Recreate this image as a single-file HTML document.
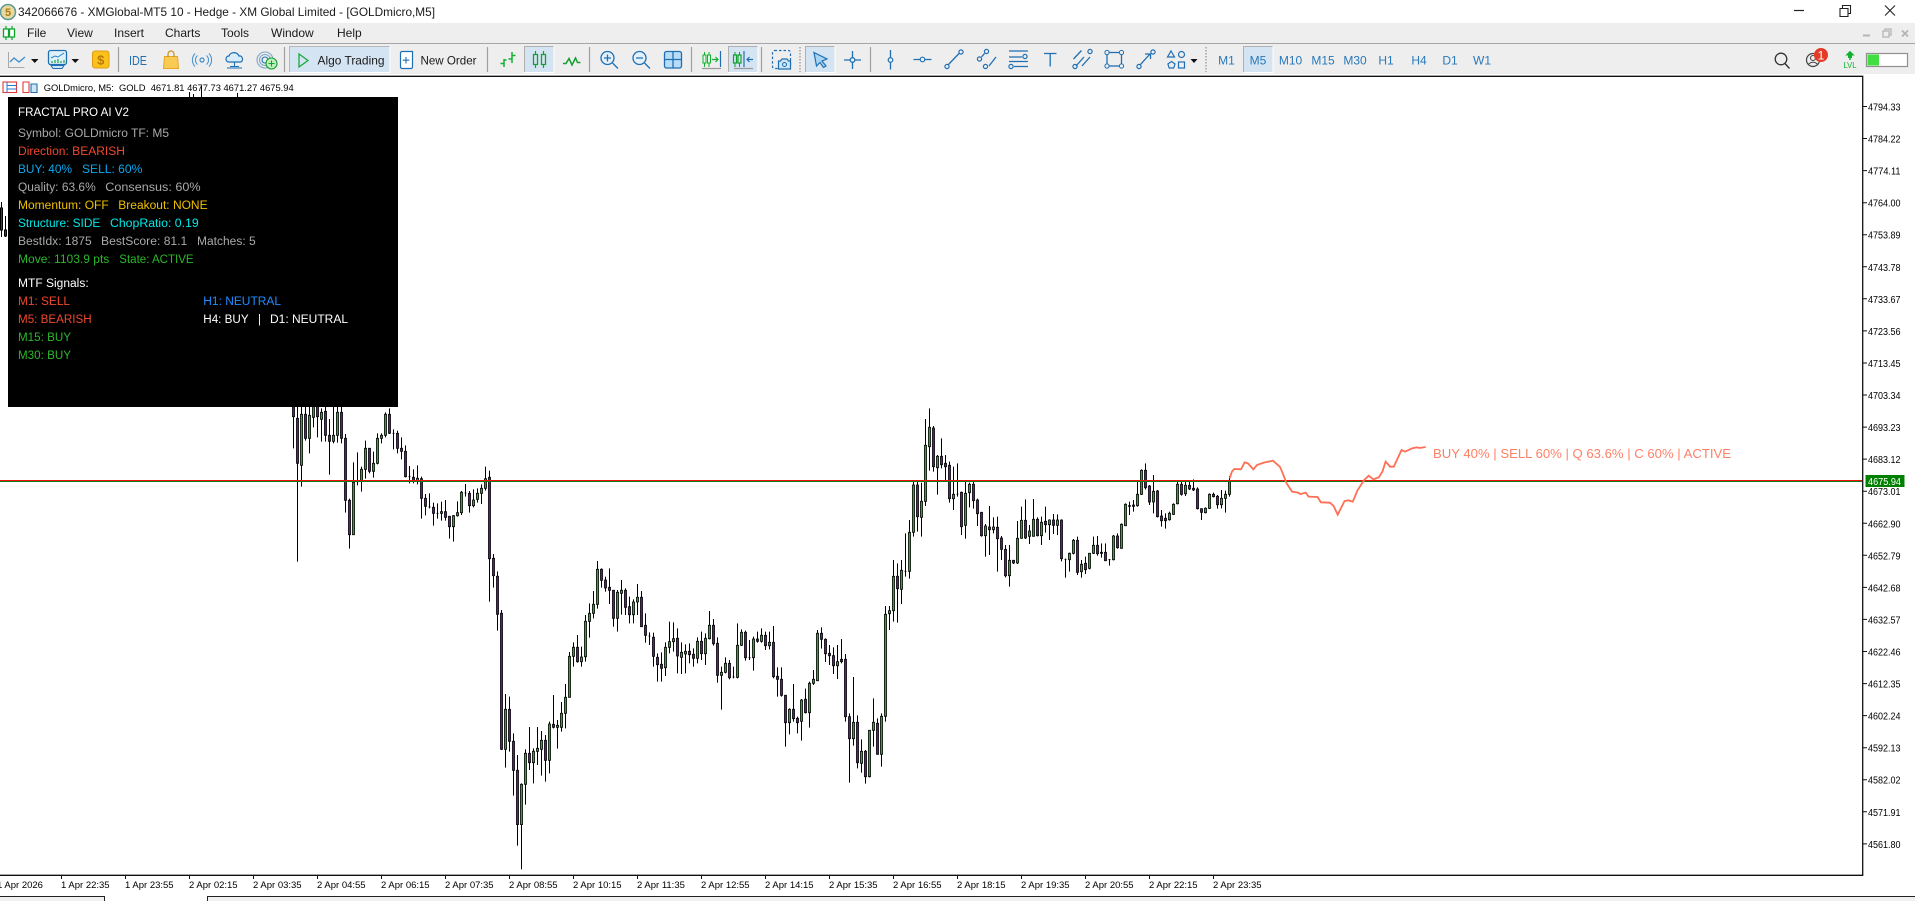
<!DOCTYPE html>
<html><head><meta charset="utf-8"><title>XMGlobal-MT5</title>
<style>
html,body{margin:0;padding:0;background:#fff;width:1915px;height:901px;overflow:hidden}
svg{display:block}
text{font-family:"Liberation Sans",sans-serif;white-space:pre}
.m{font-size:12px;fill:#1a1a1a}
.tf{font-size:12px;fill:#2a78b8;text-anchor:middle}
.a{font-size:10px;fill:#000}
.t{font-size:9.5px;fill:#000}
.p{font-size:11.5px}
.i{fill:none;stroke:#1f6fb2;stroke-width:1.3}
.g{fill:none;stroke:#1f6fb2;stroke-width:1.2}
.w{fill:none;stroke:#000;stroke-width:3}
.cg{fill:#08c408;stroke:#000;stroke-width:2.4}
.cp{fill:#6a10b0;stroke:#000;stroke-width:2.4}
.sep{stroke:#a0a0a0;stroke-width:1.2}
</style></head><body>
<svg width="1915" height="901" viewBox="0 0 1915 901" xmlns="http://www.w3.org/2000/svg">
<rect width="1915" height="901" fill="#fff"/>
<!-- title bar -->
<circle cx="8" cy="12" r="7.5" fill="#e9d9a0" stroke="#5a9a9a" stroke-width="1.5"/>
<text x="8" y="16" font-size="11" text-anchor="middle" fill="#a87a10" font-weight="bold">5</text>
<text x="18" y="16" font-size="12" fill="#1a1a1a" textLength="417" lengthAdjust="spacingAndGlyphs">342066676 - XMGlobal-MT5 10 - Hedge - XM Global Limited - [GOLDmicro,M5]</text>
<path d="M1794 10.5h10" stroke="#222" stroke-width="1.2"/>
<path d="M1840 8.5h8v8h-8zM1842.500 8.500v-3h8v8h-2.500" fill="none" stroke="#222" stroke-width="1.1"/>
<path d="M1885 5.500l10 10M1895 5.500l-10 10" stroke="#222" stroke-width="1.1"/>
<!-- menu bar -->
<rect y="23" width="1915" height="20" fill="#eeeeee"/>
<path d="M6 26v14M12 26v14" stroke="#0aa52a" stroke-width="1.2"/><path d="M3.500 29h5v8h-5zM9.500 29h5v8h-5z" fill="#fff" stroke="#0aa52a" stroke-width="1.3"/>
<text class="m" x="27" y="37">File</text><text class="m" x="67" y="37">View</text><text class="m" x="114" y="37">Insert</text><text class="m" x="165" y="37">Charts</text><text class="m" x="221" y="37">Tools</text><text class="m" x="271" y="37">Window</text><text class="m" x="337" y="37">Help</text>
<path d="M1863 35.500h7" stroke="#b5b5b5" stroke-width="2"/>
<path d="M1883 31h6v6h-6zM1885 31v-2h6v6h-2" fill="none" stroke="#b5b5b5" stroke-width="1.3"/>
<path d="M1902 30.500l6 6M1908 30.500l-6 6" stroke="#b5b5b5" stroke-width="1.8"/>
<rect y="43" width="1915" height="1.2" fill="#a6a6a6"/>
<!-- toolbar -->
<rect y="44" width="1915" height="30" fill="#eeeeee"/>
<rect y="74" width="1915" height="2" fill="#fff"/>
<!-- chart type -->
<path d="M8.500 52v15.500h16" fill="none" stroke="#a8a8a8" stroke-width="1"/>
<path d="M10 62l4-4 5 4 6-5" fill="none" stroke="#3b8ed0" stroke-width="1.3"/>
<path d="M31 59h7.500l-3.750 4z" fill="#111"/>
<rect x="48.500" y="50.500" width="18" height="14" rx="2" fill="#dff0fb" stroke="#1f6fb2" stroke-width="1.3"/>
<path d="M51 65.500h13l-2 3h-9z" fill="#cfe6f7" stroke="#1f6fb2"/>
<path d="M51 58l4-2 3 1 6-4" fill="none" stroke="#2a83c6" stroke-width="1"/>
<path d="M52 63v-2M55 63v-3M58 63v-4M61 63v-2M64 63v-3" stroke="#18a83a" stroke-width="1.2"/>
<path d="M71.500 59h7.500l-3.750 4z" fill="#111"/>
<rect x="92.500" y="51" width="16.500" height="17" rx="2.500" fill="#fbc21a" stroke="#e09a10"/>
<text x="100.700" y="64.500" font-size="13" text-anchor="middle" fill="#b97a08" font-weight="bold">$</text>
<path class="sep" d="M118.500 47v25"/>
<text x="138" y="65" font-size="12.500" text-anchor="middle" fill="#1f6fb2" textLength="18" lengthAdjust="spacingAndGlyphs">IDE</text>
<path d="M164.500 56.500h13l1 12h-15z" fill="#f9cb55" stroke="#e6a81e"/>
<path d="M168 57v-3a3 3 0 0 1 6 0v3" fill="none" stroke="#c98d10" stroke-width="1.2"/>
<circle cx="202" cy="60" r="2" fill="none" stroke="#3b8ed0" stroke-width="1.2"/>
<path d="M197.500 55.500a6 6 0 0 0 0 9M206.500 55.500a6 6 0 0 1 0 9M195 53.500a9.500 9.500 0 0 0 0 13M209 53.500a9.500 9.500 0 0 1 0 13" fill="none" stroke="#4d96d1" stroke-width="1.1"/>
<path d="M229 62c-4 0-4-6 0-6 1-4 8-5 10 0 4-1 5 6 1 6z" fill="#d8ecfa" stroke="#1f6fb2" stroke-width="1.2"/>
<path d="M234.500 62v4M227 68h15M230 66.500h9" stroke="#1f6fb2" stroke-width="1.1"/>
<circle cx="265" cy="60" r="8" fill="none" stroke="#7ea6c6" stroke-width="1.1"/><circle cx="265" cy="60" r="5.500" fill="none" stroke="#7ea6c6" stroke-width="1.1"/><circle cx="265" cy="60" r="3" fill="none" stroke="#1f6fb2" stroke-width="1.1"/>
<circle cx="271.500" cy="63.500" r="5.500" fill="#bfeebe" stroke="#14a02e" stroke-width="1.1"/><path d="M268.500 63.500h6M271.500 60.500v6" stroke="#14a02e" stroke-width="1.1"/>
<path class="sep" d="M284.500 47v25"/>
<rect x="289.500" y="46.500" width="100" height="25.500" fill="#d5e4f2"/><path d="M289.500 72v-25.500h100" fill="none" stroke="#b8b8b8"/><path d="M390 46.500v26h-100.500" fill="none" stroke="#fff"/>
<path d="M299 54l9 6.500-9 6.500z" fill="none" stroke="#18a83a" stroke-width="1.3"/>
<text x="317.500" y="64.500" class="m" textLength="67" lengthAdjust="spacingAndGlyphs">Algo Trading</text>
<path d="M400.500 53a1.500 1.500 0 0 1 1.500-1.500h10.500v15.500a1.500 1.500 0 0 1-1.500 1.500h-9a1.500 1.500 0 0 1-1.500-1.500z" fill="#fff" stroke="#1f6fb2" stroke-width="1.2"/>
<path d="M406 57v6.500M402.800 60.200h6.500" stroke="#1f6fb2" stroke-width="1.1"/>
<text x="420.500" y="64.500" class="m" textLength="56" lengthAdjust="spacingAndGlyphs">New Order</text>
<path class="sep" d="M487.500 47v25"/>
<path d="M504 59v8M500.500 63.500h3.500M504 60h2.500M512 52v11M508.500 59h3.500M512 55.500h3.500" stroke="#14b02e" stroke-width="1.5" fill="none"/>
<rect x="524.500" y="46.500" width="29" height="25.500" fill="#d5e4f2"/><path d="M524.500 72v-25.500h29" fill="none" stroke="#b0b0b0"/><path d="M554 46.500v26h-29.500" fill="none" stroke="#fff"/>
<path d="M535.500 51v17M543.500 51v17" stroke="#14a02e" stroke-width="1.2"/><path d="M533.500 54.500h4v10h-4zM541.500 54.500h4v10h-4z" fill="#d5e4f2" stroke="#14a02e" stroke-width="1.3"/>
<path d="M563 63.500h3l3-5 3 6.500 3.500-7 2 4.500h3" fill="none" stroke="#14a02e" stroke-width="1.5"/>
<path class="sep" d="M589.500 47v25"/>
<circle cx="607.500" cy="58" r="6.500" fill="#e4f1fb" stroke="#1f6fb2" stroke-width="1.3"/><path d="M604 58h7M607.500 54.500v7M612.500 63l5.500 5.500" stroke="#1f6fb2" stroke-width="1.3"/>
<circle cx="639.500" cy="58" r="6.500" fill="#e4f1fb" stroke="#1f6fb2" stroke-width="1.3"/><path d="M636 58h7M644.500 63l5.500 5.500" stroke="#1f6fb2" stroke-width="1.3"/>
<rect x="664.500" y="51.500" width="17" height="16.500" rx="2" fill="#b8dcf8" stroke="#1f6fb2" stroke-width="1.3"/><path d="M673 51.500v16.500M664.500 59.500h17" stroke="#1f6fb2" stroke-width="1.3"/>
<path class="sep" d="M691.500 47v25"/>
<path d="M704.500 52v15M709 52v15" stroke="#14b02e"/><path d="M703 55h3v8h-3zM707.500 55h3v8h-3z" fill="#e4f7e4" stroke="#14b02e"/>
<path d="M712 59.500h6M715.500 57l2.500 2.500-2.500 2.500" fill="none" stroke="#14b02e" stroke-width="1.2"/><path d="M720.500 51v16" stroke="#1f6fb2" stroke-width="1.2"/><path d="M702 68.500h19" stroke="#9a9a9a" stroke-width="1.2"/>
<rect x="728.500" y="46.500" width="29" height="25.500" fill="#d5e4f2"/><path d="M728.500 72v-25.500h29" fill="none" stroke="#b0b0b0"/><path d="M758 46.500v26h-29.500" fill="none" stroke="#fff"/>
<path d="M735 52v15M739.500 52v15" stroke="#14a02e"/><path d="M733.500 55h3v8h-3zM738 55h3v8h-3z" fill="#d5e4f2" stroke="#14a02e" stroke-width="1.2"/>
<path d="M744 51v16" stroke="#1f6fb2" stroke-width="1.2"/><path d="M753 59.500h-6M749.500 57l-2.500 2.500 2.500 2.500" fill="none" stroke="#1f6fb2" stroke-width="1.2"/><path d="M734 68.500h19" stroke="#9a9a9a" stroke-width="1.2"/>
<path class="sep" d="M761.500 47v25"/>
<rect x="772.500" y="50.500" width="18" height="18" rx="2" fill="none" stroke="#1f6fb2" stroke-width="1.2" stroke-dasharray="2.500 2"/>
<path d="M778.500 61h2l1.500-2h5l1.500 2h2v8h-12z" fill="#cfe6f7" stroke="#1f6fb2" stroke-width="1.2"/><circle cx="784.500" cy="64.500" r="2" fill="none" stroke="#1f6fb2"/>
<path d="M800 47v25" stroke="#b5b5b5" stroke-width="2" stroke-dasharray="1.500 1.500"/>
<rect x="805.500" y="46.500" width="29" height="25.500" fill="#d5e4f2"/><path d="M805.500 72v-25.500h29" fill="none" stroke="#b0b0b0"/><path d="M835 46.500v26h-29.500" fill="none" stroke="#fff"/>
<path d="M814 52.500l13 6.500-5 2 4 5-2.500 1.500-3.500-5-3.500 3.500z" fill="#a8d4f5" stroke="#1f6fb2" stroke-width="1.2"/>
<path class="i" d="M852.500 51v18M844 60h17"/><circle class="i" cx="852.500" cy="60" r="2.300" fill="#eee" style="fill:#eee"/>
<path class="sep" d="M870.500 47v25"/>
<path class="i" d="M890.500 50v7.500M890.500 62.500v7"/><circle class="g" cx="890.500" cy="60" r="2.300"/>
<path class="i" d="M913.500 59.500h6.500M925 59.500h6.500"/><circle class="g" cx="922.500" cy="59.500" r="2.300"/>
<path class="i" d="M948 65l11-11.500"/><circle class="g" cx="947" cy="66.500" r="2.100"/><circle class="g" cx="961" cy="52" r="2.100"/>
<path class="i" d="M981.500 57l3-3.500M989 66l7-9"/><circle class="g" cx="979.500" cy="59" r="2.100"/><circle class="g" cx="986.500" cy="51.500" r="2.100"/><circle class="g" cx="985.500" cy="66.500" r="2.100"/>
<path class="i" d="M1009 51h19M1009 57h13M1009 61.500h19M1014 66.500h14"/><circle class="g" cx="1025" cy="56.500" r="2.100"/><circle class="g" cx="1011" cy="66.500" r="2.100"/>
<path class="i" d="M1044 53.500h12.500M1050.200 53.500v13"/>
<path class="i" d="M1073.500 59l8-8.500M1076 66l8-9M1082 66l8-9"/><circle class="g" cx="1075" cy="66.500" r="2.100"/><circle class="g" cx="1090" cy="51.500" r="2.100"/>
<rect class="i" x="1107" y="52.500" width="14.500" height="13.500"/><circle cx="1107" cy="52.500" r="2.100" fill="#eee" stroke="#1f6fb2"/><circle cx="1121.500" cy="52.500" r="2.100" fill="#eee" stroke="#1f6fb2"/><circle cx="1107" cy="66" r="2.100" fill="#eee" stroke="#1f6fb2"/><circle cx="1121.500" cy="66" r="2.100" fill="#eee" stroke="#1f6fb2"/>
<path class="i" d="M1140 65l10-11M1145 54h5.500v5"/><circle class="g" cx="1139" cy="66.500" r="2.100"/><circle class="g" cx="1153" cy="52" r="2.100"/>
<path class="g" d="M1171 51l3.500 6h-7z"/><circle class="g" cx="1181.500" cy="54.500" r="3"/><path class="g" d="M1171.500 61.500l3.500 2.500-1.300 4h-4.500l-1.300-4z"/><rect class="g" x="1178.500" y="62" width="6" height="6"/>
<path d="M1190.500 59h7l-3.500 4z" fill="#111"/>
<path d="M1206 47v25" stroke="#b5b5b5" stroke-width="2" stroke-dasharray="1.500 1.500"/>
<rect x="1243.500" y="46.500" width="29" height="25.500" fill="#d5e4f2"/><path d="M1243.500 72v-25.500h29" fill="none" stroke="#b0b0b0"/><path d="M1273 46.500v26h-29.500" fill="none" stroke="#fff"/>
<text class="tf" x="1226.500" y="64.500">M1</text><text class="tf" x="1258" y="64.500">M5</text><text class="tf" x="1290.500" y="64.500">M10</text><text class="tf" x="1323" y="64.500">M15</text><text class="tf" x="1355" y="64.500">M30</text><text class="tf" x="1386" y="64.500">H1</text><text class="tf" x="1419" y="64.500">H4</text><text class="tf" x="1450" y="64.500">D1</text><text class="tf" x="1482" y="64.500">W1</text>
<circle cx="1781" cy="59" r="5.800" fill="none" stroke="#333" stroke-width="1.3"/><path d="M1785 63.500l4.500 5" stroke="#333" stroke-width="1.4"/>
<circle cx="1813" cy="60" r="6.500" fill="none" stroke="#444" stroke-width="1.2"/><circle cx="1813" cy="58" r="2.500" fill="none" stroke="#444" stroke-width="1.1"/><path d="M1808.500 64.500c2-3 7-3 9 0" fill="none" stroke="#444" stroke-width="1.1"/>
<circle cx="1821" cy="55" r="7" fill="#e33b28"/><text x="1821" y="59.500" font-size="12" text-anchor="middle" fill="#fff">1</text>
<path d="M1850 51.500l3.500 3.500h-2v2.500h-3v-2.500h-2z" fill="#14b02e" stroke="#14b02e"/><path d="M1850 57v3" stroke="#14b02e" stroke-width="1.500"/>
<text x="1850" y="68" font-size="8.500" text-anchor="middle" fill="#14b02e" textLength="13" lengthAdjust="spacingAndGlyphs">LVL</text>
<rect x="1866.500" y="53.500" width="41" height="13" fill="#fff" stroke="#909090" stroke-width="1.200"/><rect x="1867.500" y="54.500" width="11.500" height="11" fill="#3fe03f"/>

<!-- chart legend -->
<rect x="3" y="82" width="13.500" height="10.500" fill="#fff" stroke="#e03a3a" stroke-width="1.1"/><path d="M7 82v10.500M7 85.500h9.500M7 89h9.500" stroke="#2a78d0" stroke-width="1"/>
<path d="M23 82h6v10.500h-6z" fill="#fff" stroke="#e03a3a" stroke-width="1.1"/><path d="M31 84h6v8.500h-6z" fill="#cfe6f7" stroke="#1f6fb2" stroke-width="1.1"/>
<text x="43.700" y="91" font-size="9.500" fill="#000" textLength="250" lengthAdjust="spacingAndGlyphs">GOLDmicro, M5:  GOLD  4671.81 4677.73 4671.27 4675.94</text>

<!-- candles partially hidden top -->
<path d="M189.500 92v6M193.500 94v4M201.500 86v12M237.500 93v5M1.500 202v35M5.500 216v21" stroke="#000" fill="none"/>
<path d="M.5 208h2v22h-2z" fill="#6a10b0" stroke="#000"/><path d="M4.500 230h2v6h-2z" fill="#6a10b0" stroke="#000"/>

<!-- candles group A -->
<g transform="translate(270.17 400) scale(.33333)">
<path class="w" d="M70 0V145M82 0V485M94 0V260M106 0V122M118 0V160M130 0V82M142 0V112M154 25V125M166 0V125M178 57V224M190 0V130M202 0V128M214 0V130M226 102V338M238 296V446M250 187V404M262 157V256M274 200V275M286 122V236M298 145V220M310 155V233M322 100V193M334 100V130M346 37V112M358 25V102M370 88V148M382 92V160M394 112V178M406 136V232M418 198V250M430 208V250M442 196V253M454 230V356M466 282V346M478 280V325M490 308V377M502 310V356M514 305V362M526 300V362M538 348V416M550 345V425M562 304V350M574 273V345M586 252V290M598 273V338M610 268V322M622 265V308M634 253V312M646 200V272M658 212V605M670 462V563M682 514V692M694 630V1050M706 882V1103M718 890V1055M730 1000V1187M742 1065V1337M754 1150V1408M766 1048V1214M778 981V1110M790 1045V1150M802 981V1095M814 993V1127M826 1005V1145M838 965V1120M850 885V985M862 960V1046M874 906V995M886 852V985M898 756V893M910 727V800M922 705V788M934 740V800M946 645V785M958 610V713M970 573V655M982 483V626M994 505V563M1006 530V575M1018 505V612M1030 570V680M1042 570V695M1054 540V644M1066 565V645M1078 590V670M1090 598V670M1102 552V645M1114 573V680M1126 640V728M1138 697V735M1150 698V800M1162 760V845M1174 757V845"/>
<path class="cg" d="M91 43H97V196H91ZM115 46H121V115H115ZM127 0H133V52H127ZM151 37H157V58H151ZM187 106H193V124H187ZM199 37H205V106H199ZM247 247H253V404H247ZM271 208H277V244H271ZM283 145H289V208H283ZM307 190H313V214H307ZM319 115H325V190H319ZM331 106H337V115H331ZM343 43H349V106H343ZM439 235H445V244H439ZM511 335H517V340H511ZM547 347H553V380H547ZM559 338H565V347H559ZM571 277H577V338H571ZM607 300H613V317H607ZM619 280H625V298H619ZM631 265H637V280H631ZM643 236H649V265H643ZM703 928H709V1048H703ZM751 1153H757V1274H751ZM763 1060H769V1153H763ZM787 1054H793V1088H787ZM799 1045H805V1054H799ZM811 1021H817V1048H811ZM835 972H841V1081H835ZM859 976H865V982H859ZM871 940H877V982H871ZM883 892H889V940H883ZM895 769H901V892H895ZM907 742H913V769H907ZM931 771H937V785H931ZM943 664H949V770H943ZM955 640H961V664H955ZM967 613H973V640H967ZM979 508H985V613H979ZM1039 577H1045V655H1039ZM1051 571H1057V580H1051ZM1087 606H1093V644H1087ZM1099 592H1105V606H1099Z"/>
<path class="cp" d="M67 0H73V50H67ZM79 55H85V190H79ZM103 43H109V115H103ZM139 0H145V50H139ZM163 34H169V106H163ZM175 106H181V124H175ZM211 37H217V115H211ZM223 115H229V301H223ZM235 301H241V404H235ZM295 145H301V214H295ZM355 43H361V100H355ZM379 100H385V145H379ZM391 145H397V154H391ZM403 154H409V230H403ZM427 232H433V244H427ZM451 236H457V295H451ZM463 295H469V319H463ZM487 322H493V340H487ZM523 335H529V352H523ZM535 349H541V380H535ZM595 280H601V317H595ZM655 232H661V476H655ZM667 475H673V527H667ZM679 529H685V643H679ZM691 640H697V1048H691ZM715 928H721V1024H715ZM727 1024H733V1111H727ZM739 1111H745V1274H739ZM775 1060H781V1088H775ZM823 1021H829V1081H823ZM847 973H853V982H847ZM919 742H925V785H919ZM991 508H997V541H991ZM1003 540H1009V564H1003ZM1015 562H1021V571H1015ZM1027 571H1033V655H1027ZM1063 571H1069V622H1063ZM1075 620H1081V644H1075ZM1111 592H1117V680H1111ZM1123 676H1129V706H1123ZM1147 712H1153V769H1147ZM1159 772H1165V794H1159ZM1171 793H1177V805H1171ZM259 245H265ZM367 100H373ZM415 230H421ZM475 321H481ZM499 340H505ZM583 279H589ZM1135 708H1141Z"/>
</g>
<!-- candles group B -->
<g transform="translate(660.17 400) scale(.33333)">
<path class="w" d="M16 727V828M28 665V760M40 667V755M52 685V820M64 727V822M76 733V820M88 730V790M100 745V800M112 712V790M124 695V780M136 700V795M148 633V718M160 657V737M172 712V848M184 800V929M196 772V820M208 780V838M220 800V835M232 670V835M244 688V738M256 692V782M268 720V780M280 710V812M292 695V728M304 685V728M316 695V750M328 695V748M340 678V835M352 802V890M364 802V890M376 885V1040M388 925V1003M400 852V965M412 950V1000M424 897V1022M436 866V940M448 845V983M460 810V855M472 690V843M484 682V746M496 715V786M508 735V795M520 742V822M532 735V837M544 717V790M556 762V965M568 940V1148M580 831V1037M592 946V1105M604 1018V1118M616 1050V1151M628 990V1132M640 895V1040M652 955V1064M664 940V1100M676 618V965M688 618V690M700 480V665M712 490V668M724 480V612M736 400V530M748 360V536M760 245V410M772 245V395M784 248V410M796 57V318M808 25V212M820 78V215M832 165V284M844 115V205M856 165V245M868 185V308M880 200V330M892 190V290M904 275V405M916 240V416M928 248V322M940 240V326M952 296V378M964 336V410"/>
<path class="cg" d="M13 742H19V803H13ZM25 725H31V742H25ZM37 716H43V725H37ZM61 757H67V772H61ZM73 754H79V762H73ZM109 724H115V775H109ZM133 715H139V761H133ZM145 676H151V716H145ZM181 817H187V826H181ZM193 790H199V817H193ZM229 736H235V832H229ZM241 697H247V736H241ZM277 717H283V773H277ZM301 706H307V724H301ZM325 727H331V737H325ZM385 928H391V968H385ZM421 900H427V964H421ZM445 850H451V938H445ZM457 838H463V850H457ZM469 700H475V842H469ZM529 785H535V797H529ZM577 967H583V1016H577ZM601 1054H607V1090H601ZM625 991H631V1130H625ZM637 967H643V991H637ZM661 949H667V1063H661ZM673 643H679V949H673ZM685 632H691V641H685ZM697 529H703V632H697ZM721 511H727V568H721ZM745 397H751V514H745ZM757 255H763V397H757ZM781 304H787V352H781ZM793 136H799V304H793ZM805 82H811V140H805ZM829 169H835V203H829ZM877 283H883V296H877ZM913 280H919V376H913ZM925 253H931V278H925Z"/>
<path class="cp" d="M49 715H55V768H49ZM85 754H91V764H85ZM97 763H103V775H97ZM121 724H127V761H121ZM157 676H163V731H157ZM169 730H175V826H169ZM205 790H211V833H205ZM253 697H259V773H253ZM289 717H295V724H289ZM313 706H319V737H313ZM337 727H343V830H337ZM349 829H355V838H349ZM361 838H367V886H361ZM373 886H379V968H373ZM397 928H403V956H397ZM409 955H415V968H409ZM433 898H439V938H433ZM481 700H487V718H481ZM493 718H499V761H493ZM505 760H511V767H505ZM517 767H523V797H517ZM541 778H547V785H541ZM553 778H559V950H553ZM565 950H571V1016H565ZM589 967H595V1088H589ZM613 1054H619V1130H613ZM649 970H655V1063H649ZM709 529H715V566H709ZM769 255H775V350H769ZM817 84H823V200H817ZM841 169H847V194H841ZM853 190H859V200H853ZM865 196H871V296H865ZM901 277H907V380H901ZM937 253H943V302H937ZM949 300H955V341H949ZM961 337H967V407H961ZM217 831H223ZM265 773H271ZM733 514H739ZM889 282H895Z"/>
</g>
<!-- candles group C -->
<g transform="translate(880.17 400) scale(.33333)">
<path class="w" d="M316 372V470M328 318V465M340 352V400M352 350V515M364 408V480M376 435V532M388 435V560M400 480V492M412 363V492M424 320V416M436 298V417M448 375V432M460 297V395M472 352V409M484 350V435M496 320V398M508 358V420M520 342V402M532 343V405M544 358V484M556 476V533M568 458V515M580 417V463M592 410V525M604 480V533M616 470V522M628 460V508M640 410V462M652 408V467M664 430V473M676 430V483M688 477V497M700 405V481M712 400V446M724 370V446M736 310V378M748 305V345M760 300V335M772 242V320M784 208V285M796 190V268M808 255V315M820 225V340M832 270V352M844 330V380M856 340V386M868 335V362M880 310V345M892 245V313M904 240V287M916 240V288M928 245V270M940 238V273M952 262V328M964 325V360M976 322V340M988 280V327M1000 278V292M1012 285V326M1024 270V325M1036 272V338M1048 228V290"/>
<path class="cg" d="M313 378H319V407H313ZM337 381H343V389H337ZM421 361H427V415H421ZM409 415H415V489H409ZM445 393H451V409H445ZM457 358H463V409H457ZM481 367H487V407H481ZM505 360H511V374H505ZM529 360H535V376H529ZM565 460H571V479H565ZM577 421H583V460H577ZM601 493H607V515H601ZM625 460H631V505H625ZM637 436H643V460H637ZM697 408H703V479H697ZM721 373H727V445H721ZM733 313H739V377H733ZM769 283H775V317H769ZM781 211H787V283H781ZM817 274H823V306H817ZM865 340H871V359H865ZM877 313H883V343H877ZM889 253H895V311H889ZM913 256H919V281H913ZM973 325H979V338H973ZM985 283H991V325H985ZM1021 295H1027V314H1021ZM1033 283H1039V295H1033ZM1045 245H1051V283H1045ZM385 481H391V527H385Z"/>
<path class="cp" d="M325 381H331V389H325ZM349 382H355V416H349ZM361 414H367V448H361ZM373 448H379V527H373ZM397 481H403V489H397ZM433 361H439V414H433ZM469 358H475V407H469ZM493 364H499V374H493ZM517 360H523V376H517ZM541 360H547V476H541ZM589 421H595V517H589ZM613 490H619V509H613ZM649 436H655V461H649ZM661 457H667V460H661ZM673 457H679V482H673ZM709 408H715V443H709ZM757 315H763V319H757ZM745 317H751V319H745ZM793 211H799V263H793ZM805 258H811V306H805ZM829 273H835V350H829ZM841 348H847V362H841ZM853 355H859V362H853ZM901 253H907V283H901ZM925 256H931V267H925ZM937 265H943V270H937ZM949 267H955V326H949ZM961 326H967V337H961ZM997 283H1003V290H997ZM1009 289H1015V314H1009ZM553 478H559ZM685 479H691Z"/>
</g>

<!-- current price lines -->
<rect x="0" y="481" width="1862" height="1" fill="#127a12"/>
<rect x="0" y="480" width="1862" height="1" fill="#f01010"/>

<!-- prediction -->
<g transform="translate(1200 420) scale(.456 .33333)">
<path vector-effect="non-scaling-stroke" d="M65 175L70 155 75 147 90 148 98 127 105 130 117 148 125 135 140 128 160 122 175 140 180 155 190 190 202 215 215 218 220 222 232 218 238 230 258 231 265 247 285 248 293 258 302 284 317 243 325 241 335 245 345 212 360 180 370 167 380 178 392 172 400 155 407 125 417 140 425 140 442 90 450 95 465 85 475 82 482 84 495 81" fill="none" stroke="#ff6f55" stroke-width="1.800"/>
</g>
<text x="1433" y="458" font-size="12.500" fill="#ff7f66" textLength="298" lengthAdjust="spacingAndGlyphs">BUY 40% | SELL 60% | Q 63.6% | C 60% | ACTIVE</text>

<!-- panel -->
<rect x="8" y="97" width="390" height="310" fill="#000"/>
<g class="p">
<text class="p" x="18" y="116" fill="#fff" textLength="111" lengthAdjust="spacingAndGlyphs">FRACTAL PRO AI V2</text>
<text class="p" x="18" y="136.800" fill="#a9a9a9" textLength="151" lengthAdjust="spacingAndGlyphs">Symbol: GOLDmicro TF: M5</text>
<text class="p" x="18" y="154.800" fill="#f0482c" textLength="107" lengthAdjust="spacingAndGlyphs">Direction: BEARISH</text>
<text class="p" x="18" y="172.800" fill="#0aa8f0" textLength="54" lengthAdjust="spacingAndGlyphs">BUY: 40%</text>
<text class="p" x="82" y="172.800" fill="#0aa8f0" textLength="60.300" lengthAdjust="spacingAndGlyphs">SELL: 60%</text>
<text class="p" x="18" y="190.800" fill="#a9a9a9" textLength="77.700" lengthAdjust="spacingAndGlyphs">Quality: 63.6%</text>
<text class="p" x="105.300" y="190.800" fill="#a9a9a9" textLength="95.300" lengthAdjust="spacingAndGlyphs">Consensus: 60%</text>
<text class="p" x="18" y="208.800" fill="#f0c000" textLength="90.700" lengthAdjust="spacingAndGlyphs">Momentum: OFF</text>
<text class="p" x="118.300" y="208.800" fill="#f0c000" textLength="89.300" lengthAdjust="spacingAndGlyphs">Breakout: NONE</text>
<text class="p" x="18" y="226.800" fill="#00e8e8" textLength="82.300" lengthAdjust="spacingAndGlyphs">Structure: SIDE</text>
<text class="p" x="110" y="226.800" fill="#00e8e8" textLength="88.700" lengthAdjust="spacingAndGlyphs">ChopRatio: 0.19</text>
<text class="p" x="18" y="244.800" fill="#a9a9a9" textLength="73.700" lengthAdjust="spacingAndGlyphs">BestIdx: 1875</text>
<text class="p" x="101" y="244.800" fill="#a9a9a9" textLength="86.300" lengthAdjust="spacingAndGlyphs">BestScore: 81.1</text>
<text class="p" x="197" y="244.800" fill="#a9a9a9" textLength="58.700" lengthAdjust="spacingAndGlyphs">Matches: 5</text>
<text class="p" x="18" y="262.800" fill="#2ab82a" textLength="91.300" lengthAdjust="spacingAndGlyphs">Move: 1103.9 pts</text>
<text class="p" x="119.300" y="262.800" fill="#2ab82a" textLength="74.300" lengthAdjust="spacingAndGlyphs">State: ACTIVE</text>
<text class="p" x="18" y="286.800" fill="#fff" textLength="70.700" lengthAdjust="spacingAndGlyphs">MTF Signals:</text>
<text class="p" x="18" y="304.800" fill="#f0482c" textLength="52" lengthAdjust="spacingAndGlyphs">M1: SELL</text>
<text class="p" x="18" y="322.800" fill="#f0482c" textLength="73.700" lengthAdjust="spacingAndGlyphs">M5: BEARISH</text>
<text class="p" x="18" y="340.800" fill="#2ab82a" textLength="53" lengthAdjust="spacingAndGlyphs">M15: BUY</text>
<text class="p" x="18" y="358.800" fill="#2ab82a" textLength="53" lengthAdjust="spacingAndGlyphs">M30: BUY</text>
<text class="p" x="203.300" y="304.800" fill="#1e8cff" textLength="77.700" lengthAdjust="spacingAndGlyphs">H1: NEUTRAL</text>
<text class="p" x="203.300" y="322.800" fill="#fff" textLength="45.300" lengthAdjust="spacingAndGlyphs">H4: BUY</text>
<text class="p" x="258" y="322.800" fill="#fff">|</text>
<text class="p" x="270" y="322.800" fill="#fff" textLength="78" lengthAdjust="spacingAndGlyphs">D1: NEUTRAL</text>
</g>

<!-- frame -->
<path d="M0 76.300H1862.700V875.300H0" fill="none" stroke="#111" stroke-width="1.300"/>

<!-- price axis -->
<path d="M1863 106.500h4M1863 138.500h4M1863 170.600h4M1863 202.700h4M1863 234.700h4M1863 266.800h4M1863 298.800h4M1863 330.900h4M1863 363h4M1863 395h4M1863 427.100h4M1863 459.100h4M1863 491.200h4M1863 523.300h4M1863 555.300h4M1863 587.400h4M1863 619.400h4M1863 651.500h4M1863 683.600h4M1863 715.600h4M1863 747.700h4M1863 779.700h4M1863 811.800h4M1863 843.900h4" stroke="#111"/>
<g class="a" fill="#000">
<text class="a" x="1868" y="110.500" textLength="32.500" lengthAdjust="spacingAndGlyphs">4794.33</text>
<text class="a" x="1868" y="142.500" textLength="32.500" lengthAdjust="spacingAndGlyphs">4784.22</text>
<text class="a" x="1868" y="174.600" textLength="32.500" lengthAdjust="spacingAndGlyphs">4774.11</text>
<text class="a" x="1868" y="206.700" textLength="32.500" lengthAdjust="spacingAndGlyphs">4764.00</text>
<text class="a" x="1868" y="238.700" textLength="32.500" lengthAdjust="spacingAndGlyphs">4753.89</text>
<text class="a" x="1868" y="270.800" textLength="32.500" lengthAdjust="spacingAndGlyphs">4743.78</text>
<text class="a" x="1868" y="302.800" textLength="32.500" lengthAdjust="spacingAndGlyphs">4733.67</text>
<text class="a" x="1868" y="334.900" textLength="32.500" lengthAdjust="spacingAndGlyphs">4723.56</text>
<text class="a" x="1868" y="367" textLength="32.500" lengthAdjust="spacingAndGlyphs">4713.45</text>
<text class="a" x="1868" y="399" textLength="32.500" lengthAdjust="spacingAndGlyphs">4703.34</text>
<text class="a" x="1868" y="431.100" textLength="32.500" lengthAdjust="spacingAndGlyphs">4693.23</text>
<text class="a" x="1868" y="463.100" textLength="32.500" lengthAdjust="spacingAndGlyphs">4683.12</text>
<text class="a" x="1868" y="495.200" textLength="32.500" lengthAdjust="spacingAndGlyphs">4673.01</text>
<text class="a" x="1868" y="527.300" textLength="32.500" lengthAdjust="spacingAndGlyphs">4662.90</text>
<text class="a" x="1868" y="559.300" textLength="32.500" lengthAdjust="spacingAndGlyphs">4652.79</text>
<text class="a" x="1868" y="591.400" textLength="32.500" lengthAdjust="spacingAndGlyphs">4642.68</text>
<text class="a" x="1868" y="623.400" textLength="32.500" lengthAdjust="spacingAndGlyphs">4632.57</text>
<text class="a" x="1868" y="655.500" textLength="32.500" lengthAdjust="spacingAndGlyphs">4622.46</text>
<text class="a" x="1868" y="687.600" textLength="32.500" lengthAdjust="spacingAndGlyphs">4612.35</text>
<text class="a" x="1868" y="719.600" textLength="32.500" lengthAdjust="spacingAndGlyphs">4602.24</text>
<text class="a" x="1868" y="751.700" textLength="32.500" lengthAdjust="spacingAndGlyphs">4592.13</text>
<text class="a" x="1868" y="783.700" textLength="32.500" lengthAdjust="spacingAndGlyphs">4582.02</text>
<text class="a" x="1868" y="815.800" textLength="32.500" lengthAdjust="spacingAndGlyphs">4571.91</text>
<text class="a" x="1868" y="847.900" textLength="32.500" lengthAdjust="spacingAndGlyphs">4561.80</text>
</g>
<rect x="1865.500" y="475" width="39" height="12" fill="#008000"/>
<text x="1868" y="484.800" font-size="10" fill="#fff" textLength="33" lengthAdjust="spacingAndGlyphs">4675.94</text>

<!-- time axis -->
<path d="M61.500 875v4M125.500 875v4M189.500 875v4M253.500 875v4M317.500 875v4M381.500 875v4M445.500 875v4M509.500 875v4M573.500 875v4M637.500 875v4M701.500 875v4M765.500 875v4M829.500 875v4M893.500 875v4M957.500 875v4M1021.500 875v4M1085.500 875v4M1149.500 875v4M1213.500 875v4" stroke="#111"/>
<text class="t" x="-3" y="888">1 Apr 2026</text>
<text class="t" x="61" y="888">1 Apr 22:35</text><text class="t" x="125" y="888">1 Apr 23:55</text><text class="t" x="189" y="888">2 Apr 02:15</text><text class="t" x="253" y="888">2 Apr 03:35</text><text class="t" x="317" y="888">2 Apr 04:55</text><text class="t" x="381" y="888">2 Apr 06:15</text><text class="t" x="445" y="888">2 Apr 07:35</text><text class="t" x="509" y="888">2 Apr 08:55</text><text class="t" x="573" y="888">2 Apr 10:15</text><text class="t" x="637" y="888">2 Apr 11:35</text><text class="t" x="701" y="888">2 Apr 12:55</text><text class="t" x="765" y="888">2 Apr 14:15</text><text class="t" x="829" y="888">2 Apr 15:35</text><text class="t" x="893" y="888">2 Apr 16:55</text><text class="t" x="957" y="888">2 Apr 18:15</text><text class="t" x="1021" y="888">2 Apr 19:35</text><text class="t" x="1085" y="888">2 Apr 20:55</text><text class="t" x="1149" y="888">2 Apr 22:15</text><text class="t" x="1213" y="888">2 Apr 23:35</text>

<!-- bottom tabs -->
<path d="M-1 896.500H104.500V902H-1Z" fill="#f0f0f0" stroke="#222"/>
<path d="M207.500 902V896.500H1916V902Z" fill="#f0f0f0" stroke="#222"/>
</svg>
</body></html>
